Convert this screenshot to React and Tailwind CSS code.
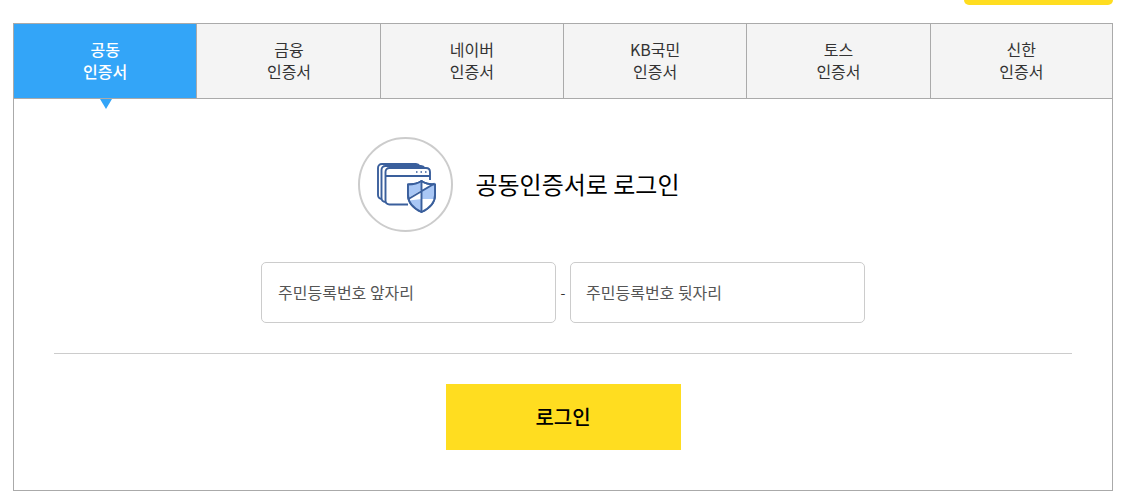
import React from 'react'

const tabs = ['공동', '금융', '네이버', 'KB국민', '토스', '신한']

function CertIcon() {
  return (
    <svg width="60" height="50" viewBox="0 0 60 50" fill="none" stroke="#3a5f9c" strokeWidth="1.9" strokeLinejoin="round" className="ml-[2px] mt-[6px]">
      <path d="M5 36 C2.5 36 1 34.5 1 32 V5 C1 2.5 2.5 1 5 1 H39 C41 1 42 2 42.5 3" />
      <path d="M8.5 39 C6 39 4.5 37.5 4.5 35 V7 C4.5 4.5 6 3 8.5 3 H44 C46 3 47 4 47.5 5" />
      <path d="M31 41.5 H12.5 C10 41.5 8.5 40 8.5 37.5 V9 C8.5 6.5 10 5 12.5 5 H49 C51.5 5 53 6.5 53 9 V17" />
      <path d="M8.5 13 H53" />
      <path d="M39 9 H40.5 M43.5 9 H45 M48 9 H49.5" strokeWidth="1.4" />
      <path d="M44.5 18 C48 20.5 53 21.5 58 21.5 V32 C58 40 52 45.5 44.5 49 C37 45.5 31 40 31 32 V21.5 C36 21.5 41 20.5 44.5 18 Z" fill="#ffffff" />
      <path d="M44.5 18 C41 20.5 36 21.5 31 21.5 V32 C31 33 31.1 34 31.3 35 L44.5 27 Z" fill="#a9c7f5" stroke="none" />
      <path d="M44.5 27 L58 19.5 V32 C58 33.5 57.8 34.8 57.4 36 L44.5 36 Z" fill="#a9c7f5" stroke="none" />
      <path d="M44.5 36 H57.4 C55.5 41.5 51 46 44.5 49 Z" fill="#ffffff" stroke="none" />
      <path d="M44.5 36 V49 C38.5 46.5 34 42.5 32 37.5 Z" fill="#a9c7f5" stroke="none" />
      <path d="M44.5 18 C48 20.5 53 21.5 58 21.5 V32 C58 40 52 45.5 44.5 49 C37 45.5 31 40 31 32 V21.5 C36 21.5 41 20.5 44.5 18 Z" />
      <path d="M44.5 18 V49 M31.5 36 L57.5 20.5" />
    </svg>
  )
}

export default function App() {
  return (
    <div className="w-[1121px] h-[496px] overflow-hidden bg-white pl-[13px] font-['Noto_Sans_CJK_KR','Noto_Sans',sans-serif]">
      <div className="w-[1100px]">
        <div className="ml-auto w-[149px] h-[5px] rounded-b-[6px] bg-[#ffdd20]" />
        <div className="mt-[18px] h-[468px] border border-[#aaaaaa]">
          <div className="flex h-[75px] border-b border-[#aaaaaa]">
            {tabs.map((t, i) => (
              <div
                key={t}
                className={
                  i === 0
                    ? 'relative w-[183.33px] pb-[2px] flex flex-col items-center justify-center bg-[#33a5f8] border-r border-[#aaaaaa] text-white font-medium text-[16px] leading-[22px]'
                    : 'relative w-[183.33px] pb-[2px] nth-2:pl-[1px] last:w-auto last:flex-1 flex flex-col items-center justify-center bg-[#f4f4f4] border-r last:border-r-0 border-[#aaaaaa] text-[#333333] text-[16px] leading-[22px]'
                }
              >
                <span>{t}</span>
                <span>인증서</span>
                {i === 0 && (
                  <span className="absolute top-full left-[86px] mt-[1px] border-x-[6px] border-x-transparent border-t-[10px] border-t-[#33a5f8]" />
                )}
              </div>
            ))}
          </div>

          <div className="flex items-center justify-center gap-[22px] mt-[38px] pr-[88px]">
            <div className="w-[95px] h-[95px] rounded-full border-2 border-[#cccccc] flex items-center justify-center">
              <CertIcon />
            </div>
            <h2 className="text-[24px] leading-[30px] mb-[1px] text-black">공동인증서로 로그인</h2>
          </div>

          <div className="flex items-center justify-center mt-[30px]">
            <input
              placeholder="주민등록번호 앞자리"
              className="w-[295px] h-[61px] px-4 pb-[2px] border border-[#cccccc] rounded-[5px] text-[16px] placeholder:text-[#555555] outline-none"
            />
            <span className="w-[14px] text-center text-[14px] text-[#333333]">-</span>
            <input
              placeholder="주민등록번호 뒷자리"
              className="w-[295px] h-[61px] pl-[15px] pr-4 pb-[2px] border border-[#cccccc] rounded-[5px] text-[16px] placeholder:text-[#555555] outline-none"
            />
          </div>

          <div className="mx-[40px] mt-[30px] border-t border-[#cccccc]" />

          <div className="flex justify-center mt-[30px]">
            <button className="w-[235px] h-[66px] bg-[#ffdd20] text-black text-[20px] font-medium">로그인</button>
          </div>
        </div>
      </div>
    </div>
  )
}
